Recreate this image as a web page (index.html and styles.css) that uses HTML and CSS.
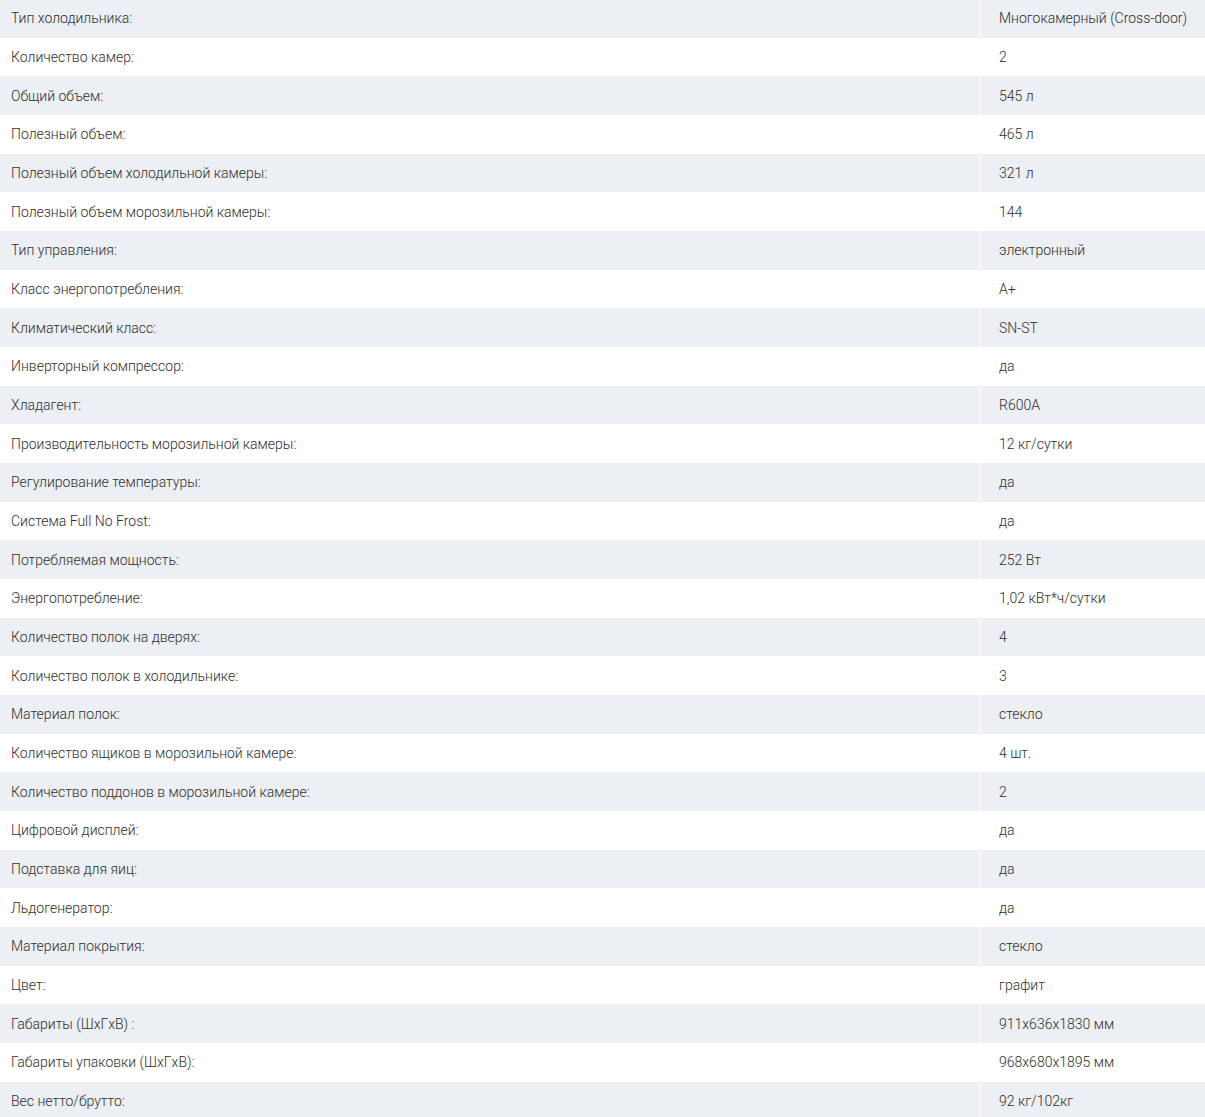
FILE: index.html
```html
<!DOCTYPE html>
<html lang="ru">
<head>
    <meta charset="UTF-8">
    <meta name="viewport" content="width=device-width, initial-scale=1.0">
    <title>Характеристики</title>
    <link rel="stylesheet" href="styles.css">
</head>
<body>
    <table class="specs">
        <tbody>
            <tr><td class="spec-name">Тип холодильника:</td><td class="spec-value">Многокамерный (Cross-door)</td></tr>
            <tr><td class="spec-name">Количество камер:</td><td class="spec-value">2</td></tr>
            <tr><td class="spec-name">Общий объем:</td><td class="spec-value">545 л</td></tr>
            <tr><td class="spec-name">Полезный объем:</td><td class="spec-value">465 л</td></tr>
            <tr><td class="spec-name">Полезный объем холодильной камеры:</td><td class="spec-value">321 л</td></tr>
            <tr><td class="spec-name">Полезный объем морозильной камеры:</td><td class="spec-value">144</td></tr>
            <tr><td class="spec-name">Тип управления:</td><td class="spec-value">электронный</td></tr>
            <tr><td class="spec-name">Класс энергопотребления:</td><td class="spec-value">A+</td></tr>
            <tr><td class="spec-name">Климатический класс:</td><td class="spec-value">SN-ST</td></tr>
            <tr><td class="spec-name">Инверторный компрессор:</td><td class="spec-value">да</td></tr>
            <tr><td class="spec-name">Хладагент:</td><td class="spec-value">R600A</td></tr>
            <tr><td class="spec-name">Производительность морозильной камеры:</td><td class="spec-value">12 кг/сутки</td></tr>
            <tr><td class="spec-name">Регулирование температуры:</td><td class="spec-value">да</td></tr>
            <tr><td class="spec-name">Система Full No Frost:</td><td class="spec-value">да</td></tr>
            <tr><td class="spec-name">Потребляемая мощность:</td><td class="spec-value">252 Вт</td></tr>
            <tr><td class="spec-name">Энергопотребление:</td><td class="spec-value">1,02 кВт*ч/сутки</td></tr>
            <tr><td class="spec-name">Количество полок на дверях:</td><td class="spec-value">4</td></tr>
            <tr><td class="spec-name">Количество полок в холодильнике:</td><td class="spec-value">3</td></tr>
            <tr><td class="spec-name">Материал полок:</td><td class="spec-value">стекло</td></tr>
            <tr><td class="spec-name">Количество ящиков в морозильной камере:</td><td class="spec-value">4 шт.</td></tr>
            <tr><td class="spec-name">Количество поддонов в морозильной камере:</td><td class="spec-value">2</td></tr>
            <tr><td class="spec-name">Цифровой дисплей:</td><td class="spec-value">да</td></tr>
            <tr><td class="spec-name">Подставка для яиц:</td><td class="spec-value">да</td></tr>
            <tr><td class="spec-name">Льдогенератор:</td><td class="spec-value">да</td></tr>
            <tr><td class="spec-name">Материал покрытия:</td><td class="spec-value">стекло</td></tr>
            <tr><td class="spec-name">Цвет:</td><td class="spec-value">графит</td></tr>
            <tr><td class="spec-name">Габариты (ШxГxВ) :</td><td class="spec-value">911x636x1830 мм</td></tr>
            <tr><td class="spec-name">Габариты упаковки (ШxГxВ):</td><td class="spec-value">968x680x1895 мм</td></tr>
            <tr><td class="spec-name">Вес нетто/брутто:</td><td class="spec-value">92 кг/102кг</td></tr>
        </tbody>
    </table>
</body>
</html>
```

FILE: styles.css
```css
body {
    margin: 0;
    padding: 0;
    background-color: #ffffff;
    font-family: Roboto, 'Noto Sans', sans-serif;
    font-size: 14px;
    font-weight: 300;
    color: #2e2e2e;
}
.specs {
    width: 100%;
    border-collapse: collapse;
    margin-top: -1px;
}
.specs tr {
    height: 38.68px;
}
.specs tr:nth-child(odd) {
    background-color: #eceff3;
}
.specs td {
    padding: 0;
    vertical-align: middle;
    white-space: nowrap;
}
.specs .spec-name {
    width: 969px;
    padding-left: 11px;
    border-right: 1px solid #ffffff;
}
.specs .spec-value {
    padding-left: 18px;
}
```
